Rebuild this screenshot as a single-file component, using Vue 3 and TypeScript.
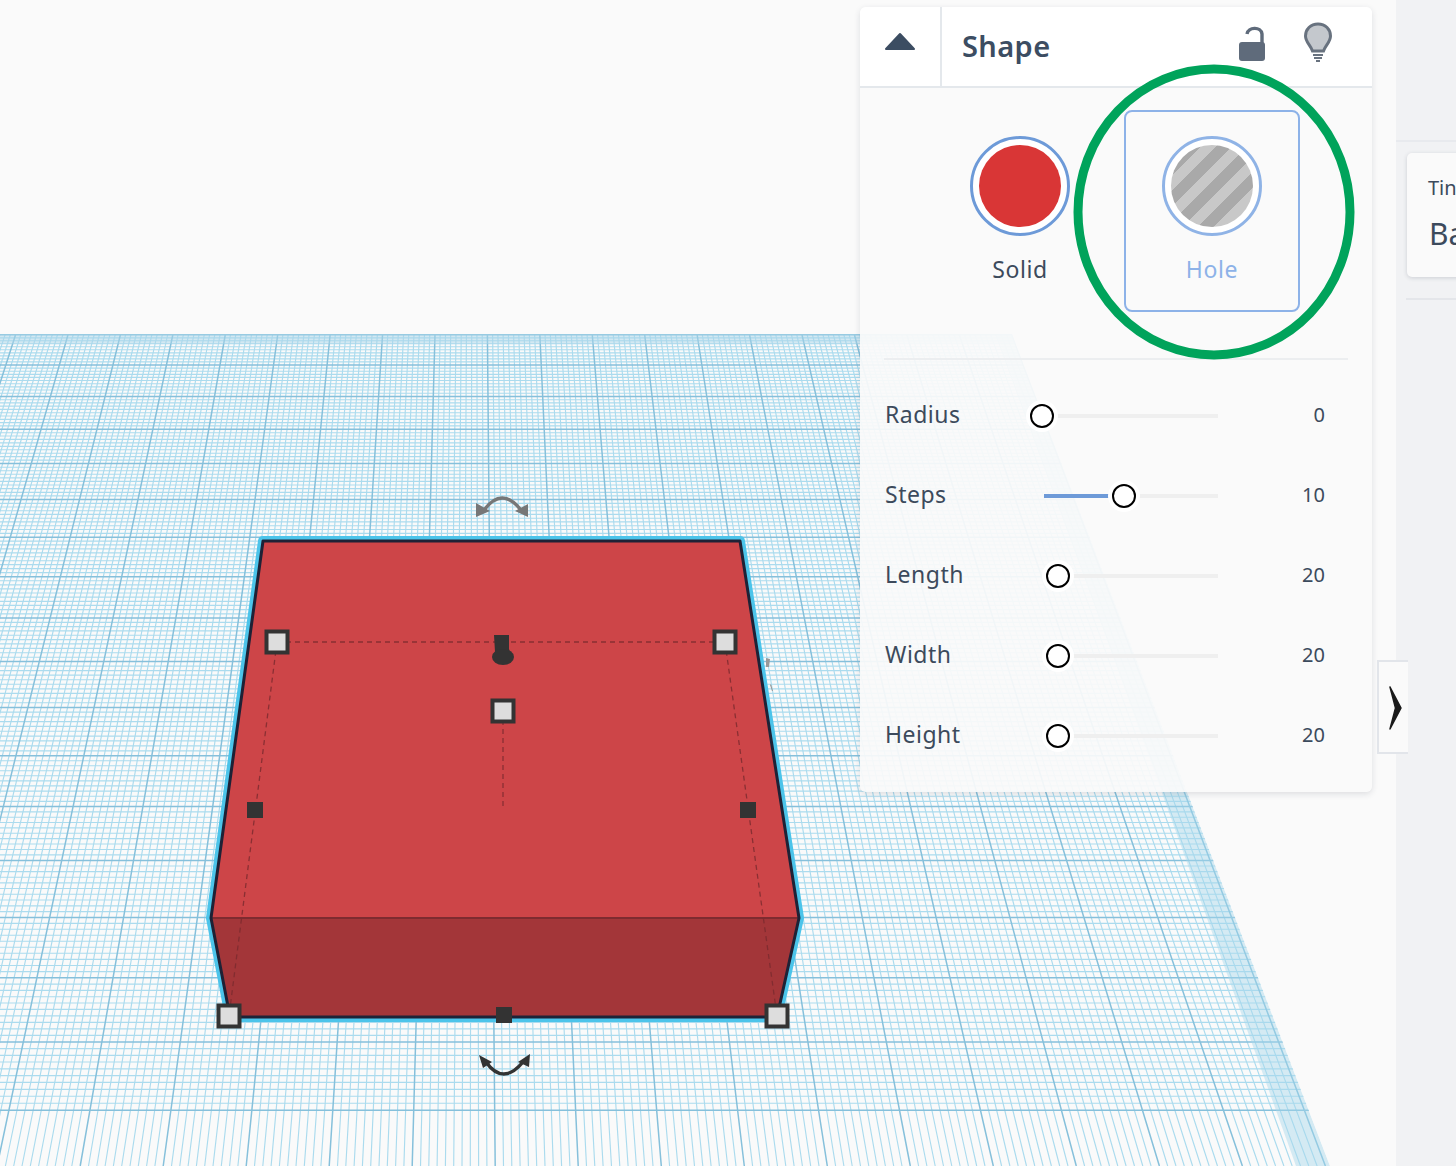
<template>
  <div class="page">
    <main class="stage">
      <svg class="scene" width="1396" height="1166" viewBox="0 0 1396 1166">
        <defs>
          <clipPath id="plane-clip">
            <polygon points="0,334 1012,334 1330,1166 0,1166" />
          </clipPath>
        </defs>
        <g clip-path="url(#plane-clip)">
          <g class="blurred">
            <path :d="minorPath" class="grid-minor" />
            <path :d="majorPath" class="grid-major" />
          </g>
          <rect x="0" y="334" width="1100" height="10" fill="#a9d6ea" opacity="0.5" />
          <polygon :points="edgeBand" fill="#a6d6ea" opacity="0.45" />
        </g>

        <!-- selected box -->
        <g class="soft">
          <polygon
            points="263,541 740,541 799,918 777,1017 230,1017 211,918"
            fill="none"
            stroke="#4cc4ea"
            stroke-width="10"
            stroke-linejoin="round"
          />
          <polygon points="263,541 740,541 799,918 211,918" fill="#cd4548" />
          <polygon points="211,918 799,918 777,1017 230,1017" fill="#a33639" />
          <line x1="211" y1="918" x2="799" y2="918" stroke="#7e2b30" stroke-width="2" />
          <polygon
            points="263,541 740,541 799,918 777,1017 230,1017 211,918"
            fill="none"
            stroke="#1e2236"
            stroke-width="3"
            stroke-linejoin="round"
          />
          <g class="dash">
            <line x1="277" y1="642" x2="725" y2="642" />
            <line x1="277" y1="642" x2="229" y2="1016" />
            <line x1="725" y1="642" x2="777" y2="1016" />
            <line x1="503" y1="711" x2="503" y2="810" />
          </g>
          <rect
            v-for="h in smallHandles"
            :key="h.x"
            :x="h.x - 8"
            :y="h.y - 8"
            width="16"
            height="16"
            fill="#333"
          />
          <g v-for="h in bigHandles" :key="h.x">
            <rect :x="h.x - 10.500" :y="h.y - 10.500" width="21" height="21" fill="#ddd" stroke="#333" stroke-width="4" />
          </g>
          <path d="M494 635h15v14l1 3h-15z" fill="#333" />
          <ellipse cx="503" cy="657" rx="11" ry="8" fill="#333" />

          <!-- rotate arrows -->
          <path d="M484 510Q502 486 521 510" fill="none" stroke="#777" stroke-width="3.500" />
          <path d="M476 517v-14l14 8z M528 517v-13l-13 7z" fill="#777" />
          <path d="M486 1062Q503 1086 523 1062" fill="none" stroke="#333" stroke-width="3.500" />
          <path d="M479 1055l13 7-9 6z M530 1054l-12 8 11 5z" fill="#333" />
          <path d="M766 658l4 1-1 8h-3z M771 684l2 7-1 0-2-6z" fill="#999" />
        </g>
      </svg>

      <section class="panel">
        <header class="panel-head">
          <button class="collapse">
            <svg width="32" height="20" viewBox="0 0 32 20">
              <path d="M16 2L30 17H2Z" fill="#3c4d62" stroke="#3c4d62" stroke-width="2" stroke-linejoin="round" />
            </svg>
          </button>
          <h2 class="panel-title">Shape</h2>
          <svg class="lock" width="30" height="38" viewBox="0 0 30 38">
            <path d="M10 9C11 2 24 1 25 9V19" fill="none" stroke="#5f6b7b" stroke-width="3.400" />
            <rect x="2" y="17" width="26" height="19" rx="3" fill="#5f6b7b" />
          </svg>
          <svg class="bulb" width="30" height="40" viewBox="0 0 30 40">
            <path
              d="M15 2C7.500 2 2.500 7.500 2.500 14C2.500 20 7.500 23 9.500 29H20.500C22.500 23 27.500 20 27.500 14C27.500 7.500 22.500 2 15 2Z"
              fill="#c4c8cd"
              stroke="#68727f"
              stroke-width="3"
            />
            <path d="M10 33H20M11 36H19M13 39H17" stroke="#68727f" stroke-width="2" />
          </svg>
        </header>

        <div class="panel-body">
          <div class="kinds">
            <div class="kind">
              <span class="swatch solid"><i></i></span>
              <span class="kind-label">Solid</span>
            </div>
            <div class="kind active">
              <span class="swatch hole"><i></i></span>
              <span class="kind-label">Hole</span>
            </div>
          </div>
          <div class="divider"></div>
          <div v-for="p in params" :key="p.label" class="param">
            <label>{{ p.label }}</label>
            <div class="slider">
              <div class="track">
                <div class="fill" :style="{ width: Math.max(0, p.pos - 14) + 'px' }"></div>
              </div>
              <span class="thumb" :style="{ left: p.pos + 'px' }"></span>
            </div>
            <span class="value">{{ p.value }}</span>
          </div>
        </div>
      </section>

      <svg class="ring" width="282" height="296" viewBox="0 0 282 296">
        <ellipse cx="141" cy="148" rx="136" ry="143" fill="none" stroke="#00a35b" stroke-width="9" />
      </svg>

      <button class="side-toggle">
        <svg width="16" height="44" viewBox="0 0 16 44">
          <path d="M2 1L13 22L2 43L7.500 22Z" fill="#1a1a1a" stroke="#1a1a1a" stroke-width="1.500" stroke-linejoin="round" />
        </svg>
      </button>
    </main>

    <aside class="sidebar">
      <div class="side-top"></div>
      <div class="lib-card">
        <div class="lib-small">Tinkercad</div>
        <div class="lib-big">Basic Shapes</div>
      </div>
      <div class="side-line"></div>
    </aside>
  </div>
</template>

<script setup lang="ts">
// perspective of the workplane: every grid line runs to one vanishing point
const VP_X = 474
const VP_Y = -1090
const TOP_Y = 334
const BOTTOM_Y = 1166

function project(x0: number, y: number) {
  return VP_X + ((x0 - VP_X) * (y - VP_Y)) / (TOP_Y - VP_Y)
}

function buildGrid() {
  let minor = ''
  let major = ''
  // lines running away from the viewer
  for (let j = -35; j <= 161; j++) {
    const x0 = 173 + 5.24 * j
    const seg = `M${x0.toFixed(1)} ${TOP_Y}L${project(x0, BOTTOM_Y).toFixed(1)} ${BOTTOM_Y}`
    if (j % 10 === 0) major += seg
    else minor += seg
  }
  // cross lines
  for (let i = -12; i <= 160; i++) {
    const y = 1 / (6.873e-4 - 1.455e-6 * i) + VP_Y
    if (y > BOTTOM_Y) break
    const seg = `M0 ${y.toFixed(1)}H1400`
    if (i % 10 === 0) major += seg
    else minor += seg
  }
  return { minor, major }
}

const { minor: minorPath, major: majorPath } = buildGrid()

// darker strip along the far right side of the plane
const edgeBand = `997,${TOP_Y} 1012,${TOP_Y} 1330,${BOTTOM_Y} 1296,${BOTTOM_Y}`

const bigHandles = [
  { x: 277, y: 642 },
  { x: 725, y: 642 },
  { x: 229, y: 1016 },
  { x: 777, y: 1016 },
  { x: 503, y: 711 },
]

const smallHandles = [
  { x: 255, y: 810 },
  { x: 748, y: 810 },
  { x: 504, y: 1015 },
]

const params = [
  { label: 'Radius', value: 0, pos: 12 },
  { label: 'Steps', value: 10, pos: 94 },
  { label: 'Length', value: 20, pos: 28 },
  { label: 'Width', value: 20, pos: 28 },
  { label: 'Height', value: 20, pos: 28 },
]
</script>

<style>
html,
body {
  margin: 0;
  background: #fafafa;
}
</style>

<style scoped>
.page {
  display: flex;
  width: 1456px;
  height: 1166px;
  overflow: hidden;
  background: #fafafa;
  font-family: 'Noto Sans', sans-serif;
  color: #3c4a5c;
}

.stage {
  position: relative;
  z-index: 1;
  width: 1396px;
  height: 100%;
  flex: none;
}

.scene {
  position: absolute;
  left: 0;
  top: 0;
}

.soft {
  filter: blur(0.5px);
}

.blurred {
  filter: blur(0.7px);
}

.grid-minor {
  stroke: #abdbee;
  stroke-width: 1.15;
  fill: none;
}

.grid-major {
  stroke: #86c0db;
  stroke-width: 1.5;
  fill: none;
}

.dash line {
  stroke: #7a2a2e;
  stroke-width: 1.3;
  stroke-dasharray: 5 4;
  opacity: 0.8;
}

.panel {
  position: absolute;
  left: 860px;
  top: 7px;
  width: 512px;
  height: 785px;
  display: flex;
  flex-direction: column;
  border-radius: 6px;
  background: rgba(250, 250, 250, 0.93);
  box-shadow: 0 2px 6px rgba(40, 50, 70, 0.14);
}

.panel-head {
  display: flex;
  align-items: center;
  height: 79px;
  flex: none;
  background: #fff;
  border-bottom: 2px solid #e4e8ec;
  border-radius: 6px 6px 0 0;
}

.collapse {
  width: 82px;
  height: 100%;
  padding: 0 0 6px;
  border: 0;
  border-right: 2px solid #e4e8ec;
  background: none;
}

.panel-title {
  margin: 0 0 0 20px;
  font-size: 29px;
  font-weight: 600;
  letter-spacing: 0.4px;
  color: #3c4d62;
  flex: 1;
  position: relative;
  top: -1px;
}

.lock {
  margin: -6px 36px 0 0;
}

.bulb {
  margin: -9px 39px 0 0;
}

.panel-body {
  flex: 1;
  padding-top: 22px;
}

.kinds {
  display: flex;
  justify-content: flex-end;
  gap: 16px;
  padding-right: 72px;
}

.kind {
  box-sizing: border-box;
  width: 176px;
  height: 202px;
  display: flex;
  flex-direction: column;
  align-items: center;
  padding-top: 24px;
  border: 2px solid transparent;
  border-radius: 8px;
}

.kind.active {
  border-color: #8db2e8;
}

.swatch {
  box-sizing: border-box;
  width: 100px;
  height: 100px;
  padding: 6px;
  border-radius: 50%;
  border: 3px solid #6d9ad8;
  background: #fff;
}

.swatch i {
  display: block;
  width: 100%;
  height: 100%;
  border-radius: 50%;
}

.solid i {
  background: #d93636;
}

.hole {
  border-color: #8fb3e6;
}

.hole i {
  background: repeating-linear-gradient(135deg, #c8c8c8 0 11px, #a9a9a9 11px 22px);
}

.kind-label {
  margin-top: 16px;
  font-size: 23px;
  line-height: 34px;
  letter-spacing: 0.6px;
  color: #3c4a5c;
}

.active .kind-label {
  color: #8db2e8;
}

.divider {
  height: 2px;
  margin: 46px 24px 16px;
  background: #eceef0;
}

.param {
  display: grid;
  grid-template-columns: 145px 188px 107px;
  align-items: center;
  height: 80px;
  padding-left: 25px;
}

.param label {
  font-size: 23px;
  letter-spacing: 0.5px;
  padding-bottom: 4px;
}

.slider {
  position: relative;
  height: 24px;
}

.track {
  position: absolute;
  left: 14px;
  right: 0;
  top: 10px;
  height: 4px;
  background: #efefef;
}

.fill {
  height: 100%;
  background: #6d9ad8;
}

.thumb {
  position: absolute;
  top: 0;
  box-sizing: border-box;
  width: 24px;
  height: 24px;
  margin-left: -12px;
  border: 2px solid #000;
  border-radius: 50%;
  background: #fff;
  box-shadow: 0 0 0 4px #fff;
}

.value {
  text-align: right;
  font-size: 20px;
  padding-bottom: 4px;
}

.ring {
  position: absolute;
  left: 1073px;
  top: 64px;
}

.side-toggle {
  position: absolute;
  left: 1377px;
  top: 660px;
  width: 31px;
  height: 94px;
  padding: 4px 0 0 4px;
  border: 2px solid #e2e5ea;
  border-right: 0;
  background: #fafafa;
}

.sidebar {
  position: relative;
  width: 60px;
  flex: none;
  background: #f1f2f4;
}

.side-top {
  height: 140px;
  border-bottom: 2px solid #e8eaee;
}

.lib-card {
  box-sizing: border-box;
  width: 300px;
  height: 124px;
  margin: 11px 0 0 11px;
  padding: 21px 21px;
  white-space: nowrap;
  background: #fafafa;
  border-radius: 5px;
  box-shadow: 0 1px 4px rgba(40, 50, 70, 0.18);
}

.lib-small {
  font-size: 20px;
  line-height: 28px;
}

.lib-big {
  margin-top: 12px;
  margin-left: 1px;
  font-size: 30px;
  line-height: 40px;
}

.side-line {
  height: 2px;
  margin: 21px 0 0 10px;
  background: #e4e6ea;
}
</style>
